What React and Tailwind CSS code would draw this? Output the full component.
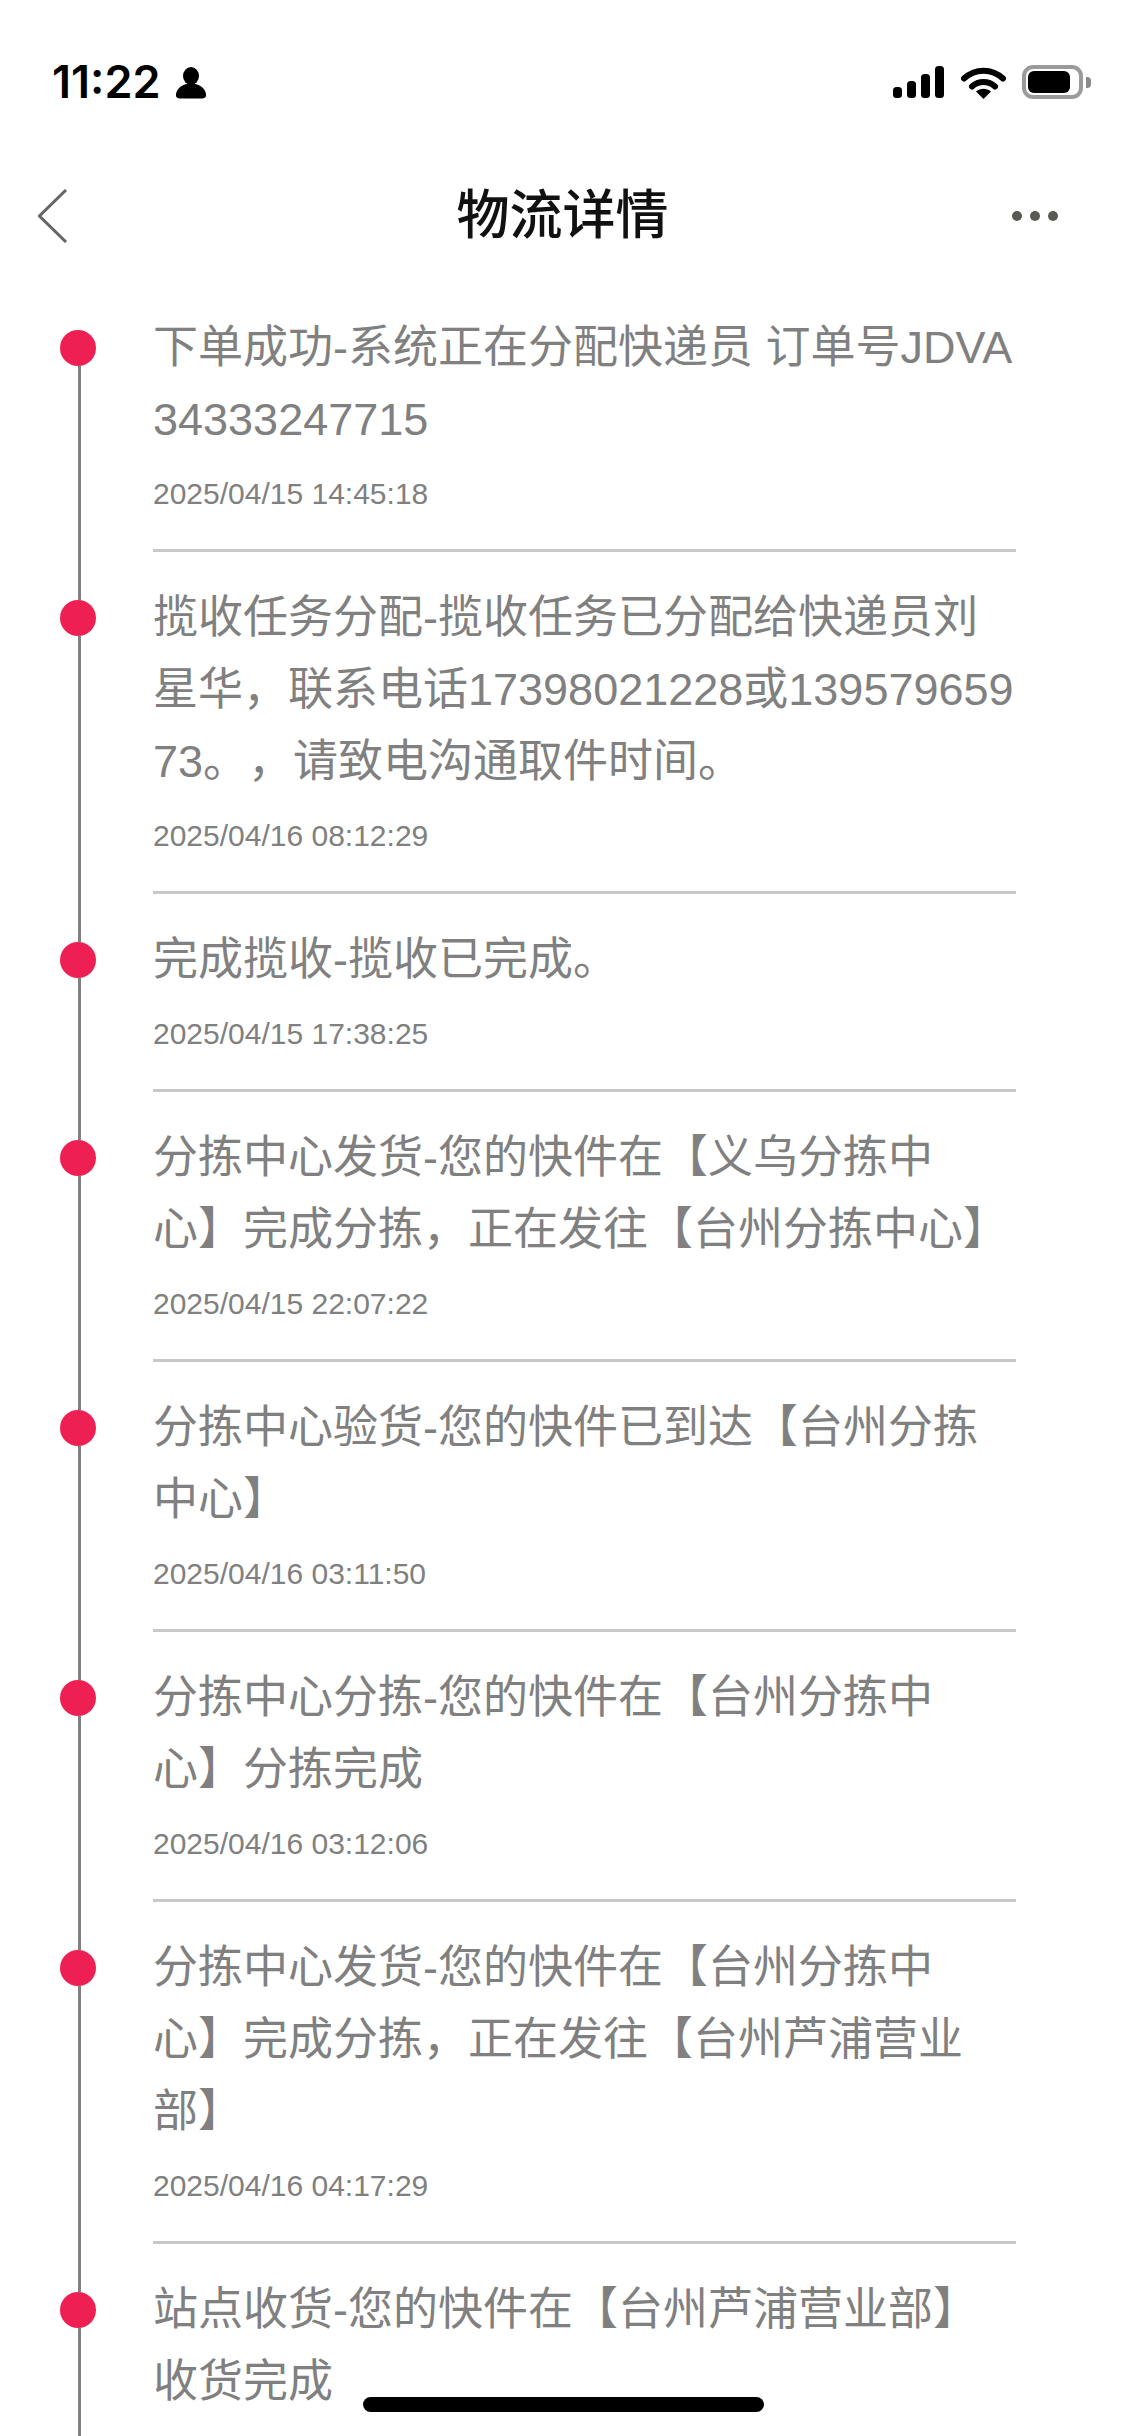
const events = [
  { title: "下单成功-系统正在分配快递员 订单号JDVA34333247715", time: "2025/04/15 14:45:18" },
  { title: "揽收任务分配-揽收任务已分配给快递员刘星华，联系电话17398021228或13957965973。，请致电沟通取件时间。", time: "2025/04/16 08:12:29" },
  { title: "完成揽收-揽收已完成。", time: "2025/04/15 17:38:25" },
  { title: "分拣中心发货-您的快件在【义乌分拣中心】完成分拣，正在发往【台州分拣中心】", time: "2025/04/15 22:07:22" },
  { title: "分拣中心验货-您的快件已到达【台州分拣中心】", time: "2025/04/16 03:11:50" },
  { title: "分拣中心分拣-您的快件在【台州分拣中心】分拣完成", time: "2025/04/16 03:12:06" },
  { title: "分拣中心发货-您的快件在【台州分拣中心】完成分拣，正在发往【台州芦浦营业部】", time: "2025/04/16 04:17:29" },
  { title: "站点收货-您的快件在【台州芦浦营业部】收货完成" },
];

function StatusBar() {
  return (
    <div className="h-[156px] pt-[65px] pl-[52px] pr-[34px] flex justify-between items-start">
      <div className="flex items-center h-[34px]">
        <span className="w-[110px] text-[45px] leading-[34px] font-semibold text-black font-['Inter',sans-serif]">11:22</span>
        <svg className="ml-[14px]" width="30" height="33" viewBox="0 0 30 33">
          <ellipse cx="15" cy="10" rx="8" ry="9" fill="#000" />
          <path d="M0 28C1 22 7 17.5 15 17.5S29 22 30 28C30.5 31 29 32.5 26 32.5H4C1 32.5-.5 31 0 28z" fill="#000" />
        </svg>
      </div>
      <div className="flex items-center h-[34px]">
        <svg width="51" height="32" viewBox="0 0 51 32">
          <rect x="0" y="21" width="9" height="11" rx="3.5" fill="#000" />
          <rect x="14" y="15" width="9" height="17" rx="3.5" fill="#000" />
          <rect x="28" y="8" width="9" height="24" rx="3.5" fill="#000" />
          <rect x="42" y="0" width="9" height="32" rx="3.5" fill="#000" />
        </svg>
        <svg className="ml-[17px]" width="45" height="33" viewBox="0 0 45 33">
          <path d="M3 12.5C14 2 31 2 42 12.5" fill="none" stroke="#000" strokeWidth="6" strokeLinecap="round" />
          <path d="M11 20.5C17.5 14.5 27.5 14.5 34 20.5" fill="none" stroke="#000" strokeWidth="6" strokeLinecap="round" />
          <path d="M22.5 33L15 25.5C19.5 21.8 25.5 21.8 30 25.5z" fill="#000" />
        </svg>
        <div className="ml-[16px] flex items-center">
          <div className="w-[61px] h-[34px] border-[4px] border-[#9a9a9a] rounded-[11px] p-[2px]">
            <div className="w-[42px] h-full bg-black rounded-[6px]" />
          </div>
          <div className="ml-[3px] w-[5px] h-[11px] bg-[#8a8a8a] rounded-r-[4px]" />
        </div>
      </div>
    </div>
  );
}

function NavBar() {
  return (
    <div className="h-[120px] px-[38px] grid grid-cols-[1fr_auto_1fr] items-center">
      <svg width="30" height="54" viewBox="0 0 30 54">
        <path d="M28 1L1.5 27L28 53" fill="none" stroke="#666" strokeWidth="3" />
      </svg>
      <div className="text-[53px] leading-[72px] font-medium text-[#111]">物流详情</div>
      <div className="flex justify-end gap-[8px] pr-[29px]">
        <span className="w-[10px] h-[10px] rounded-full bg-[#5a5a55]" />
        <span className="w-[10px] h-[10px] rounded-full bg-[#5a5a55]" />
        <span className="w-[10px] h-[10px] rounded-full bg-[#5a5a55]" />
      </div>
    </div>
  );
}

function TimelineItem({ item, first }) {
  return (
    <div className="flex">
      <div className="w-[153px] pl-[60px] shrink-0">
        <div className="w-[36px] h-full flex flex-col items-center">
          <div className={`w-[3px] ml-[3px] h-[48px] ${first ? "" : "bg-[#808080]"}`} />
          <div className="w-[36px] h-[36px] rounded-full bg-[#ee1f52] shrink-0" />
          <div className="w-[3px] ml-[3px] flex-1 bg-[#808080]" />
        </div>
      </div>
      <div className="w-[863px] pt-[30px] pb-[37px] border-b-[3px] border-[#c8c8c8]">
        <div className="text-[45px] leading-[72px] text-[#808080] break-all [text-spacing-trim:space-all]">{item.title}</div>
        {item.time && <div className="mt-[20px] text-[30px] leading-[36px] text-[#808080]">{item.time}</div>}
      </div>
    </div>
  );
}

export default function App() {
  return (
    <div className="relative w-[1125px] h-[2436px] overflow-hidden bg-white font-['Liberation_Sans','Noto_Sans_CJK_SC',sans-serif]" lang="zh-CN">
      <StatusBar />
      <NavBar />
      <div className="pt-[6px]">
        {events.map((item, i) => (
          <TimelineItem key={i} item={item} first={i === 0} />
        ))}
      </div>
      <div className="absolute left-[363px] top-[2397px] w-[401px] h-[15px] rounded-full bg-black" />
    </div>
  );
}
